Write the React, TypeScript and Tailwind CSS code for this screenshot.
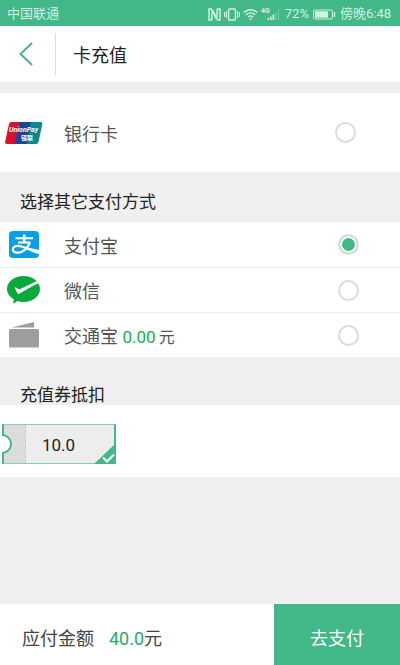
import React, { useState } from "react";
import type { FC, ReactNode } from "react";

const StatusIcons: FC = () => (
  <div className="flex items-center gap-[3px]">
    <svg className="w-[13px] h-[13px]" viewBox="0 0 13 13" fill="none" stroke="currentColor">
      <path d="M4 12H1V1h2.400l5 10M9 1h3v11H9.600l-5-10" strokeWidth="1.500" />
      <path d="M3.900 4v8M9.100 1v8" strokeWidth="1.500" />
    </svg>
    <svg className="w-[16px] h-[13px]" viewBox="0 0 16 13" fill="none" stroke="currentColor">
      <rect x="4.600" y="1" width="6.800" height="11" rx="1" strokeWidth="1.400" />
      <path d="M2.400 3v7M13.600 3v7M.6 4v5M15.400 4v5" strokeWidth="1.100" />
    </svg>
    <svg className="w-[15px] h-[13px]" viewBox="0 0 15 13" fill="none" stroke="currentColor">
      <path d="M.7 4.600c4-3.800 9.600-3.800 13.600 0M2.800 7c2.800-2.600 6.600-2.600 9.400 0M4.900 9.300c1.600-1.500 3.600-1.500 5.200 0" strokeWidth="1.400" />
      <path d="M6 10.600h3l-1.500 1.900z" fill="currentColor" stroke="none" />
    </svg>
    <svg className="w-[20px] h-[14px]" viewBox="0 0 20 14" fill="currentColor">
      <text x="0" y="6" fontSize="7" fontWeight="700" fontFamily="Roboto, sans-serif">4G</text>
      <path d="M6.500 11h1.600v2H6.500zM9 9.500h1.600V13H9zM11.600 7.500h1.600V13h-1.600z" />
      <path d="M14 5h1.400v8H14zM16.800 2h1.400v11h-1.400z" opacity=".3" />
    </svg>
  </div>
);

const BatteryIcon: FC = () => (
  <svg className="w-[23px] h-[11px]" viewBox="0 0 23 11" fill="none" stroke="currentColor">
    <rect x=".6" y="1" width="18.800" height="9" rx="1" strokeWidth="1" />
    <rect x="2" y="2.300" width="13" height="6.400" fill="currentColor" stroke="none" />
    <path d="M21.500 3v5" strokeWidth="1.400" />
  </svg>
);

const UnionPayIcon: FC = () => (
  <svg className="w-[38px] h-[22px]" viewBox="0 0 38 22">
    <path d="M6.500 0H17l-5 22H2Q-.3 22 .2 19.600L4 2Q4.500 0 6.500 0z" fill="#d8112f" />
    <path d="M14.500 0H27l-4.500 22H9.800z" fill="#12479c" />
    <path d="M26 0h9.500q2.300 0 1.800 2.200L33.500 20q-.5 2-2.500 2h-9.500z" fill="#078a8f" />
    <g fill="#fff" fontWeight="700">
      <text x="4" y="10" fontSize="7" fontStyle="italic" fontFamily="Roboto, sans-serif">
        UnionPay
      </text>
      <text x="16" y="18" fontSize="6" fontFamily="'Noto Sans CJK SC', sans-serif">银联</text>
    </g>
  </svg>
);

const AlipayIcon: FC = () => (
  <svg className="w-[30px] h-[27px]" viewBox="0 0 30 27">
    <rect width="30" height="27" rx="4" fill="#089fe8" />
    <g fill="none" stroke="#fff">
      <path d="M6.500 7.200h17.500M9 11.600h12.500" strokeWidth="2" />
      <path d="M15.200 3.500v8" strokeWidth="2.600" />
      <path d="M20.800 11.500c-1.500 4-4.500 7.600-8 9.200-3.800 1.800-8.800 1.200-9-2.200-.1-2.600 3.200-4 6.700-3.400 5 .8 10.500 3.800 18.500 6" strokeWidth="2.200" />
    </g>
    <path d="M18.500 16.500 30 19v4.200c-4-1.200-9-3.200-13-5.200z" fill="#fff" />
  </svg>
);

const WechatIcon: FC = () => (
  <svg className="w-[34px] h-[28px]" viewBox="0 0 34 28">
    <path
      d="M16.500 0C25.800 0 33 5.800 33 13s-7.200 13-16.500 13c-2.200 0-4.200-.3-6-.9L6.200 27.700l.6-4.400C2.700 20.900 0 17.200 0 13 0 5.800 7.200 0 16.500 0z"
      fill="#09a83c"
    />
    <path d="M7.500 11.300c1.600.2 3.400 1.400 4.800 2.300 5.700-2.900 11.700-5.800 17.700-8.600l1.600 1.900C25.300 10 19 13.600 12.600 17.600c-1 .6-1.800.3-2.300-.6z" fill="#fff" />
  </svg>
);

const WalletIcon: FC = () => (
  <svg className="w-[30px] h-[26px]" viewBox="0 0 30 26" fill="#9c9e9d">
    <path d="M2.500 5.600 24 .2q1.200-.2 1.200 1v4.400z" />
    <rect y="7" width="30" height="18.500" rx="1.500" />
  </svg>
);

interface MethodProps {
  id: string;
  icon: ReactNode;
  value: string;
  onSelect: (id: string) => void;
  className: string;
  children: ReactNode;
}

const Method: FC<MethodProps> = ({ id, icon, value, onSelect, className, children }) => (
  <label className={`flex items-center bg-white text-[18px] leading-6 text-[#555] ${className}`}>
    <span className="flex w-12 shrink-0 justify-center">{icon}</span>
    <span className="flex-1 pl-4 pt-1">{children}</span>
    <input
      type="radio"
      name="method"
      value={id}
      checked={value === id}
      onChange={() => onSelect(id)}
      className="size-[21px] appearance-none rounded-full border-2 border-[#dcdcdc] bg-white checked:bg-[#42b787] checked:shadow-[inset_0_0_0_2px_#fff]"
    />
  </label>
);

const Coupon: FC = () => {
  const [used, setUsed] = useState(true);

  return (
    <button
      type="button"
      aria-pressed={used}
      onClick={() => setUsed(!used)}
      className="relative flex h-10 w-[114px] border-x-2 border-y border-x-[#42b787] border-y-[#86d0b1] bg-[#ededed]"
    >
      <span className="h-full w-[22px] border-r border-dashed border-[#c8c8c8] bg-[#dcdcdc]" />
      <span className="self-center pl-4 pt-0.5 text-[17px] leading-6 text-[#222]">10.0</span>
      <svg className="absolute -left-0.5 top-[9px] h-5 w-[11px]" viewBox="0 0 11 20">
        <path d="M0 1a9 9 0 0 1 0 18" fill="#fff" stroke="#42b787" strokeWidth="2" />
        <path d="M0 2v16" stroke="#fff" strokeWidth="2" />
      </svg>
      {used && (
        <svg className="absolute -bottom-px -right-0.5 h-[21px] w-[22px]" viewBox="0 0 22 21">
          <path d="M22 0v21H0z" fill="#42b787" />
          <path d="m9 14.500 4 4 7-7" fill="none" stroke="#fff" strokeWidth="2" />
        </svg>
      )}
    </button>
  );
};

const App: FC = () => {
  const [method, setMethod] = useState("alipay");

  return (
    <div className="flex min-h-screen flex-col bg-[#efefef] font-[Roboto,'Noto_Sans_CJK_SC',sans-serif]">
      <div className="flex h-[26px] items-center justify-between bg-[#42b787] pl-[7px] pr-[9px] pt-0.5 text-[13px] text-[#d3f1e4]">
        <span>中国联通</span>
        <div className="flex items-center gap-1">
          <StatusIcons />
          <span>72%</span>
          <BatteryIcon />
          <span>傍晚6:48</span>
        </div>
      </div>

      <header className="flex h-14 items-center bg-white">
        <button type="button" aria-label="返回" className="flex h-[42px] w-14 items-center border-r border-[#dedede] pl-[19px] text-[#42b787]">
          <svg className="h-6 w-[14px]" viewBox="0 0 14 24" fill="none" stroke="currentColor" strokeWidth="2">
            <path d="M13 1 1.500 12 13 23" />
          </svg>
        </button>
        <h1 className="pl-[17px] pt-1 text-[18px] leading-6 text-[#222]">卡充值</h1>
      </header>

      <main className="flex-1 pt-[11px]">
        <Method id="bank" icon={<UnionPayIcon />} value={method} onSelect={setMethod} className="h-[79px] pr-11">
          银行卡
        </Method>

        <h2 className="px-5 pb-2 pt-[18px] text-[17px] leading-6 text-[#222]">选择其它支付方式</h2>
        <Method id="alipay" icon={<AlipayIcon />} value={method} onSelect={setMethod} className="h-[45px] pr-[41px]">
          支付宝
        </Method>
        <Method id="wechat" icon={<WechatIcon />} value={method} onSelect={setMethod} className="h-[45px] border-t border-[#ececec] pr-[41px]">
          微信
        </Method>
        <Method id="jiaotong" icon={<WalletIcon />} value={method} onSelect={setMethod} className="h-[45px] border-t border-[#ececec] pr-[41px]">
          交通宝 <span className="text-[17px] text-[#16b04a]">0.00</span>
          <span className="pl-[3px] text-[16px]">元</span>
        </Method>

        <h2 className="px-5 pt-7 text-[17px] leading-5 text-[#222]">充值券抵扣</h2>
        <div className="bg-white pb-[13px] pl-[2px] pt-[19px]">
          <Coupon />
        </div>
      </main>

      <footer className="flex h-[61px] bg-white text-[18px]">
        <p className="flex flex-1 items-center pl-[22px] pt-2 text-[#444]">
          应付金额
          <span className="pl-[15px] text-[#1fab69]">40.0</span>元
        </p>
        <button type="button" className="w-[126px] bg-[#42b787] pt-2 text-white">
          去支付
        </button>
      </footer>
    </div>
  );
};

export default App;
